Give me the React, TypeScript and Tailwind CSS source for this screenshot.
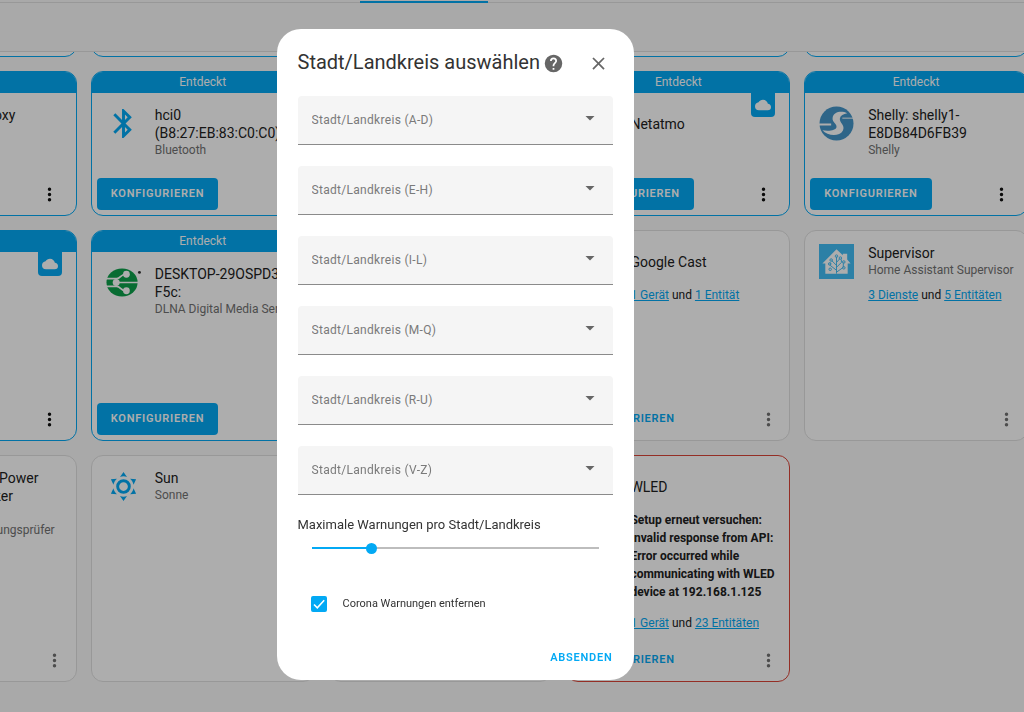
import React, { useState } from "react";

type Kind = "discovered" | "normal" | "error";

interface CardData {
  id: string;
  kind: Kind;
  title?: string[];
  subtitle?: string[];
  icon?: React.ReactNode;
  cloud?: boolean;
  error?: string;
  links?: string[];
  configure?: boolean;
}

const paths = {
  bluetooth:
    "M14.88,16.29L13,18.17V14.41M13,5.83L14.88,7.71L13,9.58M17.71,7.71L12,2H11V9.58L6.41,5L5,6.41L10.59,12L5,17.58L6.41,19L11,14.41V22H12L17.71,16.29L13.41,12L17.71,7.71Z",
  sunny:
    "M12,7A5,5 0 0,1 17,12A5,5 0 0,1 12,17A5,5 0 0,1 7,12A5,5 0 0,1 12,7M12,9A3,3 0 0,0 9,12A3,3 0 0,0 12,15A3,3 0 0,0 15,12A3,3 0 0,0 12,9M12,2L14.39,5.42C13.65,5.15 12.84,5 12,5C11.16,5 10.35,5.15 9.61,5.42L12,2M3.34,7L7.5,6.65C6.9,7.16 6.36,7.78 5.94,8.5C5.5,9.24 5.25,10 5.11,10.79L3.34,7M3.36,17L5.12,13.23C5.26,14 5.53,14.78 5.95,15.5C6.37,16.24 6.91,16.86 7.5,17.37L3.36,17M20.65,7L18.88,10.79C18.74,10 18.47,9.23 18.05,8.5C17.63,7.78 17.1,7.15 16.5,6.64L20.65,7M20.64,17L16.5,17.36C17.09,16.85 17.62,16.22 18.04,15.5C18.46,14.77 18.73,14 18.87,13.21L20.64,17M12,22L9.59,18.56C10.33,18.83 11.14,19 12,19C12.82,19 13.63,18.83 14.37,18.56L12,22Z",
  cloud:
    "M19.35,10.03C18.67,6.59 15.64,4 12,4C9.11,4 6.6,5.64 5.35,8.03C2.34,8.36 0,10.9 0,14A6,6 0 0,0 6,20H19A5,5 0 0,0 24,15C24,12.36 21.95,10.22 19.35,10.03Z",
  help: "M15.07,11.25L14.17,12.17C13.45,12.89 13,13.5 13,15H11V14.5C11,13.39 11.45,12.39 12.17,11.67L13.41,10.41C13.78,10.05 14,9.55 14,9C14,7.89 13.1,7 12,7A2,2 0 0,0 10,9H8A4,4 0 0,1 12,5A4,4 0 0,1 16,9C16,9.88 15.64,10.67 15.07,11.25M13,19H11V17H13M12,2A10,10 0 0,0 2,12A10,10 0 0,0 12,22A10,10 0 0,0 22,12C22,6.47 17.5,2 12,2Z",
  close:
    "M19,6.41L17.59,5L12,10.59L6.41,5L5,6.41L10.59,12L5,17.59L6.41,19L12,13.41L17.59,19L19,17.59L13.41,12L19,6.41Z",
  dots: "M12,16A2,2 0 0,1 14,18A2,2 0 0,1 12,20A2,2 0 0,1 10,18A2,2 0 0,1 12,16M12,10A2,2 0 0,1 14,12A2,2 0 0,1 12,14A2,2 0 0,1 10,12A2,2 0 0,1 12,10M12,4A2,2 0 0,1 14,6A2,2 0 0,1 12,8A2,2 0 0,1 10,6A2,2 0 0,1 12,4Z",
};

function Icon({ d, className }: { d: string; className: string }) {
  return (
    <svg viewBox="0 0 24 24" fill="currentColor" aria-hidden="true" className={className}>
      <path d={d} />
    </svg>
  );
}

function DlnaLogo() {
  return (
    <svg viewBox="0 0 36 36" aria-hidden="true" className="size-full">
      <ellipse cx="16.5" cy="18" rx="16" ry="14.5" fill="#0c9f4a" />
      <g fill="none" stroke="#fff" strokeWidth="1.7">
        <path d="M0 14H11C15 14 15 9.5 20 9.5" />
        <path d="M10 18H34" />
        <path d="M0 22H11C15 22 15 26.5 20 26.5" />
      </g>
      <g fill="#fff">
        <circle cx="21" cy="9.5" r="3.5" />
        <circle cx="10.5" cy="18" r="3.6" />
        <circle cx="21" cy="26.5" r="3.5" />
      </g>
      <circle cx="34.4" cy="7.6" r="1.5" fill="#333" />
    </svg>
  );
}

function ShellyLogo() {
  return (
    <svg viewBox="0 0 36 36" aria-hidden="true" className="size-full">
      <circle cx="18" cy="18" r="17.5" fill="#4495c9" />
      <path
        d="M29 7.5C23 4.500 15 6 14 12C13.200 16.500 18.500 18 18 21.500C17.500 25 11 26 3.500 25C8.500 31 21 32 24.500 25.500C27.500 19.500 20.500 17 21.500 12.500C22.200 9.500 25 8.500 29 7.5Z"
        fill="#fff"
      />
      <path d="M0 19H12.500" stroke="#fff" strokeWidth="2" />
      <path d="M24 12.500H35" stroke="#fff" strokeWidth="1" />
    </svg>
  );
}

function SupervisorLogo() {
  return (
    <svg viewBox="0 0 36 36" aria-hidden="true" className="size-full">
      <rect width="36" height="36" fill="#41bdf5" />
      <path d="M18 5.500L24.500 11.500V10H29V16L32.500 20H29.500V30.500H6.500V20H3.500Z" fill="#fff" />
      <g fill="none" stroke="#41bdf5" strokeWidth="1">
        <path d="M18 30.500V13M18 27L11.500 22V19M18 22L13 17M18 29L25 24V19M18 24L23 19V16M18 19L21.500 15" />
        <circle cx="18" cy="12.500" r="1.300" />
        <circle cx="12.500" cy="16.500" r="1.300" />
        <circle cx="11" cy="20.500" r="1.300" />
        <circle cx="22" cy="14.500" r="1.300" />
        <circle cx="25.500" cy="18.500" r="1.300" />
        <circle cx="25.500" cy="24.500" r="1.300" />
        <circle cx="11.500" cy="26" r="1.300" />
      </g>
    </svg>
  );
}

const cards: CardData[] = [
  { id: "proxy", kind: "discovered", title: ["Bluetooth Proxy"], subtitle: ["ESPHome"] },
  {
    id: "hci0",
    kind: "discovered",
    title: ["hci0", "(B8:27:EB:83:C0:C0)"],
    subtitle: ["Bluetooth"],
    icon: <Icon d={paths.bluetooth} className="size-full text-[#03a9f4]" />,
  },
  { id: "discovered-3", kind: "discovered" },
  { id: "netatmo", kind: "discovered", title: ["Netatmo"], cloud: true },
  {
    id: "shelly",
    kind: "discovered",
    title: ["Shelly: shelly1-", "E8DB84D6FB39"],
    subtitle: ["Shelly"],
    icon: <ShellyLogo />,
  },
  { id: "discovered-6", kind: "discovered", cloud: true },
  {
    id: "dlna",
    kind: "discovered",
    title: ["DESKTOP-29OSPD3:", "F5c:"],
    subtitle: ["DLNA Digital Media Server"],
    icon: <DlnaLogo />,
  },
  { id: "discovered-8", kind: "discovered" },
  { id: "cast", kind: "normal", title: ["Google Cast"], links: ["1 Gerät", "1 Entität"], configure: true },
  {
    id: "supervisor",
    kind: "normal",
    title: ["Supervisor"],
    subtitle: ["Home Assistant Supervisor"],
    links: ["3 Dienste", "5 Entitäten"],
    icon: <SupervisorLogo />,
  },
  {
    id: "power",
    kind: "normal",
    title: ["Raspberry Pi Power", "Supply Checker"],
    subtitle: ["Raspberry Pi", "Energieversorgungsprüfer"],
  },
  {
    id: "sun",
    kind: "normal",
    title: ["Sun"],
    subtitle: ["Sonne"],
    icon: <Icon d={paths.sunny} className="size-full text-[#03a9f4]" />,
  },
  { id: "normal-13", kind: "normal" },
  {
    id: "wled",
    kind: "error",
    title: ["WLED"],
    error: "Setup erneut versuchen: Invalid response from API: Error occurred while communicating with WLED device at 192.168.1.125",
    links: ["1 Gerät", "23 Entitäten"],
    configure: true,
  },
];

const borders: Record<Kind, string> = {
  discovered: "border-[#03a9f4]",
  normal: "border-[#e0e0e0]",
  error: "border-[#db4437]",
};

function IntegrationCard({ card }: { card: CardData }) {
  const discovered = card.kind === "discovered";
  return (
    <article
      className={`relative flex min-w-0 flex-col overflow-hidden rounded-xl border bg-white ${borders[card.kind]}`}
    >
      {discovered && (
        <div className="bg-[#03a9f4] text-center text-xs leading-[21px] text-white">Entdeckt</div>
      )}
      {card.cloud && (
        <span className="absolute top-[21px] right-[14px] flex size-6 items-center justify-center rounded-b bg-[#03a9f4] text-white">
          <Icon d={paths.cloud} className="size-4" />
        </span>
      )}
      <header className="flex gap-[14px] pt-[13px] pl-[14px]">
        <div className="size-[35px] shrink-0">{card.icon}</div>
        <div className="flex min-h-[35px] flex-col justify-center whitespace-nowrap">
          <h2 className="text-sm leading-[18px] text-[#212121]">
            {card.title?.map((line) => (
              <span key={line} className="block">
                {line}
              </span>
            ))}
          </h2>
          {card.subtitle?.map((line) => (
            <p key={line} className="text-xs leading-[17px] text-[#727272]">
              {line}
            </p>
          ))}
        </div>
      </header>
      {card.error && (
        <p className="pt-[7px] pr-[7px] pl-[63px] text-xs leading-[18px] font-bold text-[#212121]">{card.error}</p>
      )}
      {card.links && (
        <p
          className={`pl-[63px] text-xs leading-4 whitespace-nowrap text-[#212121] ${card.error ? "pt-[14px]" : "pt-2"}`}
        >
          <a href="#first" className="text-[#03a9f4] underline">
            {card.links[0]}
          </a>{" "}
          und{" "}
          <a href="#second" className="text-[#03a9f4] underline">
            {card.links[1]}
          </a>
        </p>
      )}
      <footer
        className={`mt-auto flex items-center pb-[5px] pl-[5px] ${discovered ? "pr-[12px]" : "pr-[7px]"}`}
      >
        {discovered && (
          <button
            type="button"
            className="h-8 rounded bg-[#03a9f4] px-[14px] text-[11px] font-semibold tracking-[0.07em] text-white"
          >
            KONFIGURIEREN
          </button>
        )}
        {card.configure && (
          <button
            type="button"
            className="h-8 rounded px-[9px] text-[11px] font-semibold tracking-[0.07em] text-[#03a9f4]"
          >
            KONFIGURIEREN
          </button>
        )}
        <button
          type="button"
          aria-label="Menü"
          className={`ml-auto flex h-8 w-7 items-center justify-center ${discovered ? "text-[#111111]" : "text-[#727272]"}`}
        >
          <Icon d={paths.dots} className="size-[21px]" />
        </button>
      </footer>
    </article>
  );
}

const ranges = ["A-D", "E-H", "I-L", "M-Q", "R-U", "V-Z"];

function RegionSelect({ range }: { range: string }) {
  const label = `Stadt/Landkreis (${range})`;
  return (
    <div className="relative">
      <select
        aria-label={label}
        className="block h-[49px] w-full appearance-none rounded-t border-b border-[#8a8a8a] bg-[#f5f5f5] px-[14px] text-xs tracking-wide text-[#7a7a7a]"
      >
        <option>{label}</option>
      </select>
      <svg
        viewBox="0 0 10 5"
        aria-hidden="true"
        className="pointer-events-none absolute top-[20px] right-[18px] h-[5px] w-[10px]"
      >
        <path d="M0.500 0H9.500L5 4.500Z" fill="#666" />
      </svg>
    </div>
  );
}

function RegionDialog() {
  const [max, setMax] = useState(5);
  const [corona, setCorona] = useState(true);
  const fill = ((max - 1) / 19) * 100;
  return (
    <div className="fixed inset-0 flex items-start justify-center bg-black/32 pt-[29px] pr-[114px]">
      <form
        role="dialog"
        aria-labelledby="dialog-title"
        onSubmit={(e) => e.preventDefault()}
        className="w-[357px] rounded-[24px] bg-white px-[21px] pb-[6px]"
      >
        <div className="flex h-[67px] items-center">
          <h1 id="dialog-title" className="pb-[2px] text-xl text-[#333333]">
            Stadt/Landkreis auswählen
          </h1>
          <a href="#help" aria-label="Hilfe" className="mt-[2px] ml-[3px] text-[#666666]">
            <Icon d={paths.help} className="size-[21px]" />
          </a>
          <button type="button" aria-label="Schließen" className="mt-[2px] mr-1 ml-auto text-[#666666]">
            <Icon d={paths.close} className="size-[21px]" />
          </button>
        </div>
        <div className="flex flex-col gap-[21px]">
          {ranges.map((range) => (
            <RegionSelect key={range} range={range} />
          ))}
        </div>
        <label htmlFor="max" className="mt-[21px] block text-[13px] leading-[18px] text-[#333333]">
          Maximale Warnungen pro Stadt/Landkreis
        </label>
        <div className="relative mx-[14px] mt-[7px] flex h-[14px] items-center">
          <div className="h-[2px] w-full bg-[#bdbdbd]" />
          <div className="absolute left-0 h-[2px] bg-[#03a9f4]" style={{ width: `${fill}%` }} />
          <div className="absolute -inset-x-[6px] inset-y-0 flex">
            <input
              id="max"
              type="range"
              min={1}
              max={20}
              value={max}
              onChange={(e) => setMax(Number(e.target.value))}
              className="w-full appearance-none bg-transparent [&::-webkit-slider-thumb]:size-[11px] [&::-webkit-slider-thumb]:appearance-none [&::-webkit-slider-thumb]:rounded-full [&::-webkit-slider-thumb]:bg-[#03a9f4]"
            />
          </div>
        </div>
        <div className="mt-[41px] ml-[13px] flex items-center gap-4">
          <span className="relative flex">
            <input
              id="corona"
              type="checkbox"
              checked={corona}
              onChange={(e) => setCorona(e.target.checked)}
              className="peer size-4 appearance-none rounded-xs border-2 border-[#727272] checked:border-[#03a9f4] checked:bg-[#03a9f4]"
            />
            <svg
              viewBox="0 0 16 16"
              aria-hidden="true"
              className="pointer-events-none absolute inset-0 hidden size-4 peer-checked:block"
            >
              <path d="M3 8.500L6.300 11.800L13.200 4.300" fill="none" stroke="#fff" strokeWidth="1.600" />
            </svg>
          </span>
          <label htmlFor="corona" className="text-[11px] leading-4 text-[#333333]">
            Corona Warnungen entfernen
          </label>
        </div>
        <div className="mt-[30px] flex justify-end">
          <button type="submit" className="h-8 text-[11px] font-semibold tracking-[0.07em] text-[#03a9f4]">
            ABSENDEN
          </button>
        </div>
      </form>
    </div>
  );
}

export default function App() {
  return (
    <div className="min-h-screen overflow-hidden bg-[#fafafa] font-[Roboto,sans-serif]">
      <nav className="flex h-[3px] items-end border-b border-[#e0e0e0]">
        <div className="-mb-px ml-[360px] h-[2px] w-32 bg-[#03a9f4]" />
      </nav>
      <div className="h-[49px] border-b border-[#e0e0e0]" />
      <main className="-mr-1 -ml-[147px]">
        <div className="grid h-[5px] grid-cols-5 content-end gap-[14px] overflow-hidden">
          {[0, 1, 2, 3, 4].map((n) => (
            <div key={n} className="h-8 rounded-b-xl border border-[#03a9f4] bg-white" />
          ))}
        </div>
        <div className="mt-[14px] grid grid-cols-5 grid-rows-[minmax(145px,auto)_minmax(211px,auto)_minmax(227px,auto)] gap-[14px]">
          {cards.map((card) => (
            <IntegrationCard key={card.id} card={card} />
          ))}
        </div>
      </main>
      <RegionDialog />
    </div>
  );
}
